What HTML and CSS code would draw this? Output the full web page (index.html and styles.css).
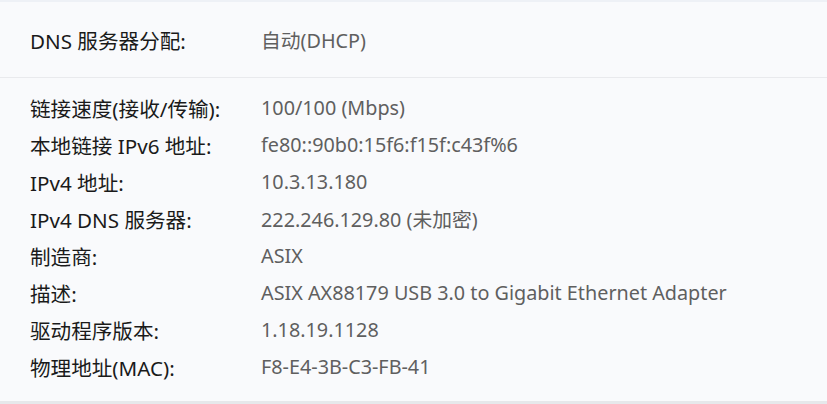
FILE: index.html
```html
<!DOCTYPE html>
<html lang="zh-CN">
<head>
<meta charset="utf-8">
<link rel="stylesheet" href="styles.css">
</head>
<body>
<div class="card">
  <div class="section top">
    <div class="row"><span class="label">DNS 服务器分配:</span><span class="value">自动(DHCP)</span></div>
  </div>
  <div class="section props">
    <div class="row"><span class="label">链接速度(接收/传输):</span><span class="value">100/100 (Mbps)</span></div>
    <div class="row"><span class="label">本地链接 IPv6 地址:</span><span class="value">fe80::90b0:15f6:f15f:c43f%6</span></div>
    <div class="row"><span class="label">IPv4 地址:</span><span class="value">10.3.13.180</span></div>
    <div class="row"><span class="label">IPv4 DNS 服务器:</span><span class="value">222.246.129.80 (未加密)</span></div>
    <div class="row"><span class="label">制造商:</span><span class="value">ASIX</span></div>
    <div class="row"><span class="label">描述:</span><span class="value">ASIX AX88179 USB 3.0 to Gigabit Ethernet Adapter</span></div>
    <div class="row"><span class="label">驱动程序版本:</span><span class="value">1.18.19.1128</span></div>
    <div class="row"><span class="label">物理地址(MAC):</span><span class="value">F8-E4-3B-C3-FB-41</span></div>
  </div>
</div>
</body>
</html>
```
FILE: styles.css
```css
html, body {
  margin: 0;
  padding: 0;
}
body {
  width: 827px;
  height: 404px;
  background: #e6e8eb;
  font-family: "Noto Sans", "Noto Sans CJK SC", sans-serif;
  font-size: 19.8px;
  overflow: hidden;
}
.card {
  box-sizing: border-box;
  height: 401px;
  border-top: 2px solid #eef1f6;
  background: #f9fafc;
}
.section.top {
  height: 75px;
  display: flex;
  align-items: center;
  border-bottom: 1px solid #e9eaed;
}
.section.props {
  padding-top: 11px;
  display: flex;
  flex-direction: column;
}
.row {
  display: flex;
  align-items: center;
  height: 37px;
  padding-left: 30px;
  white-space: nowrap;
}
.label {
  width: 231px;
  color: #1a1a1a;
  font-size: 20.6px;
}
.value {
  color: #5f5f5f;
}
```
